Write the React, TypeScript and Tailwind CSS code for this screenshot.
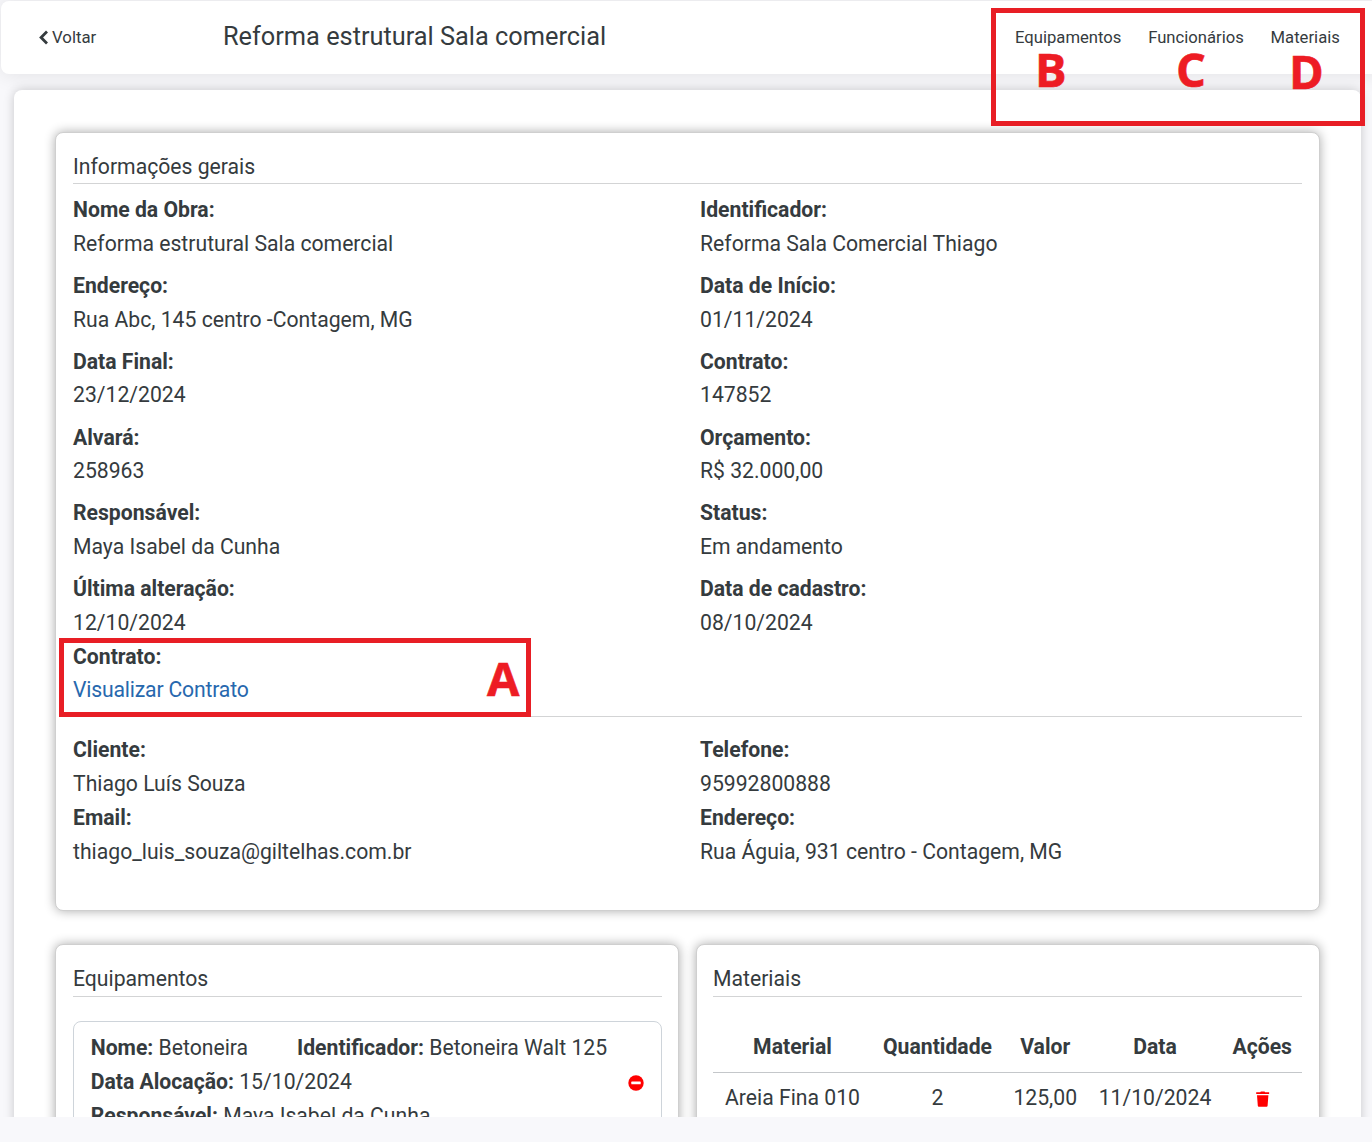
import type { ReactNode } from "react";

type Item = [string, string];

const general: Item[] = [
  ["Nome da Obra:", "Reforma estrutural Sala comercial"],
  ["Identificador:", "Reforma Sala Comercial Thiago"],
  ["Endereço:", "Rua Abc, 145 centro -Contagem, MG"],
  ["Data de Início:", "01/11/2024"],
  ["Data Final:", "23/12/2024"],
  ["Contrato:", "147852"],
  ["Alvará:", "258963"],
  ["Orçamento:", "R$ 32.000,00"],
  ["Responsável:", "Maya Isabel da Cunha"],
  ["Status:", "Em andamento"],
  ["Última alteração:", "12/10/2024"],
  ["Data de cadastro:", "08/10/2024"],
];

const client: Item[] = [
  ["Cliente:", "Thiago Luís Souza"],
  ["Telefone:", "95992800888"],
  ["Email:", "thiago_luis_souza@giltelhas.com.br"],
  ["Endereço:", "Rua Águia, 931 centro - Contagem, MG"],
];

function Field({ label, children }: { label: string; children: ReactNode }) {
  return (
    <div>
      <div className="font-bold">{label}</div>
      <div>{children}</div>
    </div>
  );
}

function Card({ title, className, children }: { title: string; className: string; children: ReactNode }) {
  return (
    <section className={`rounded-lg border border-[#cfcfcf] bg-white pt-[17px] shadow-[0_0_11px_rgba(0,0,0,0.33)] ${className}`}>
      <h2 className="h-[34px] border-b border-[#d3d4d5]">{title}</h2>
      {children}
    </section>
  );
}

function Letter({ className, children }: { className: string; children: string }) {
  return (
    <span className={`absolute font-['Open_Sans',sans-serif] text-[47px] leading-[48px] font-bold text-[#ed1c24] [-webkit-text-stroke:0.6px_#ed1c24] ${className}`}>
      {children}
    </span>
  );
}

export default function App() {
  return (
    <div className="relative h-[1142px] w-[1372px] overflow-hidden bg-[#f8f8fb] font-['Roboto',sans-serif] text-[21.18px] leading-[33.7px] text-[#353b3e]">
      <div className="h-[1117px] overflow-hidden">
        <header className="mt-px ml-px flex h-[73px] w-[1380px] items-center rounded-lg bg-white pl-[37px] text-[16.8px] shadow-[0_0_21px_rgba(0,0,0,0.1)]">
          <a className="flex w-[185px] items-center gap-[3px]">
            <svg viewBox="0 0 11 15" className="h-[15px] w-[11px]" fill="none" stroke="currentColor" strokeWidth="2.8">
              <path d="M9 1.6 3.1 7.5 9 13.4" />
            </svg>
            Voltar
          </a>
          <h1 className="w-[792px] pb-[2px] text-[25.33px]">Reforma estrutural Sala comercial</h1>
          <nav className="flex gap-[26.8px] text-[16.65px]">
            <a>Equipamentos</a>
            <a>Funcionários</a>
            <a>Materiais</a>
          </nav>
        </header>

        <main className="relative mt-4 ml-[14px] h-[1200px] w-[1347px] rounded-lg bg-white px-[41px] pt-[42px] shadow-[0_0_11px_rgba(0,0,0,0.2)]">
          <Card title="Informações gerais" className="h-[779px] w-[1265px] px-[17px]">
            <div className="mt-[9px] grid grid-cols-[627px_1fr] gap-y-[8.45px]">
              {general.map(([label, value]) => (
                <Field key={label + value} label={label}>{value}</Field>
              ))}
            </div>
            <div className="h-[77.2px] border-b border-[#d3d4d5]">
              <Field label="Contrato:">
                <a className="tracking-[-0.18px] text-[#2768ae]">Visualizar Contrato</a>
              </Field>
            </div>
            <div className="mt-[16.6px] grid grid-cols-[627px_1fr]">
              {client.map(([label, value]) => (
                <Field key={label} label={label}>{value}</Field>
              ))}
            </div>
          </Card>

          <div className="mt-[33px] flex gap-[17px]">
            <Card title="Equipamentos" className="h-[400px] w-[624px] pr-4 pl-[17px] [&>h2]:h-[35px]">
              <div className="mt-6 flex h-[300px] justify-between rounded-lg border border-[#ced4da] pt-[9.4px] pr-[17px] pl-[16.7px]">
                <div>
                  <div className="flex">
                    <p className="w-[206.3px]"><b>Nome:</b> Betoneira</p>
                    <p><b>Identificador:</b> Betoneira Walt 125</p>
                  </div>
                  <p><b>Data Alocação:</b> 15/10/2024</p>
                  <p><b>Responsável:</b> Maya Isabel da Cunha</p>
                </div>
                <svg viewBox="0 0 16 16" className="mt-[44px] size-4">
                  <circle cx="8" cy="8" r="7.7" fill="#f00" />
                  <rect x="3.3" y="6.6" width="9.4" height="2.7" rx="0.6" fill="#fff" />
                </svg>
              </div>
            </Card>
            <Card title="Materiais" className="h-[400px] w-[624px] pr-[17px] pl-4 [&>h2]:h-[35px]">
              <table className="mt-6 w-full table-fixed border-collapse text-center">
                <colgroup>
                  <col className="w-[159px]" />
                  <col className="w-[131px]" />
                  <col className="w-[84.5px]" />
                  <col className="w-[135px]" />
                  <col />
                </colgroup>
                <thead>
                  <tr className="h-[51px] border-b border-[#c4c7ca]">
                    {["Material", "Quantidade", "Valor", "Data", "Ações"].map((h) => (
                      <th key={h} className="p-0 pt-[2px] font-bold">{h}</th>
                    ))}
                  </tr>
                </thead>
                <tbody>
                  <tr className="h-[51px]">
                    <td>Areia Fina 010</td>
                    <td>2</td>
                    <td>125,00</td>
                    <td>11/10/2024</td>
                    <td>
                      <svg viewBox="0 0 14 16" className="mx-auto mt-[2px] h-4 w-[14px] translate-x-[0.7px]" fill="#f00">
                        <path d="M.5 1.2h4L5.2.5h3.6l.7.7h4v1.9H.5zM1.3 4.2h11.4l-.8 10.6q-.1.9-1 .9H3.1q-.9 0-1-.9z" />
                      </svg>
                    </td>
                  </tr>
                </tbody>
              </table>
            </Card>
          </div>
        </main>
      </div>

      <div className="absolute top-[8px] left-[991px] h-[118px] w-[374px] border-5 border-[#e81e25]" />
      <div className="absolute top-[638px] left-[59px] h-[79px] w-[472px] border-5 border-[#e81e25]" />
      <Letter className="top-[45px] left-[1035px]">B</Letter>
      <Letter className="top-[45px] left-[1176px]">C</Letter>
      <Letter className="top-[47px] left-[1289px]">D</Letter>
      <Letter className="top-[654px] left-[487px]">A</Letter>
    </div>
  );
}
